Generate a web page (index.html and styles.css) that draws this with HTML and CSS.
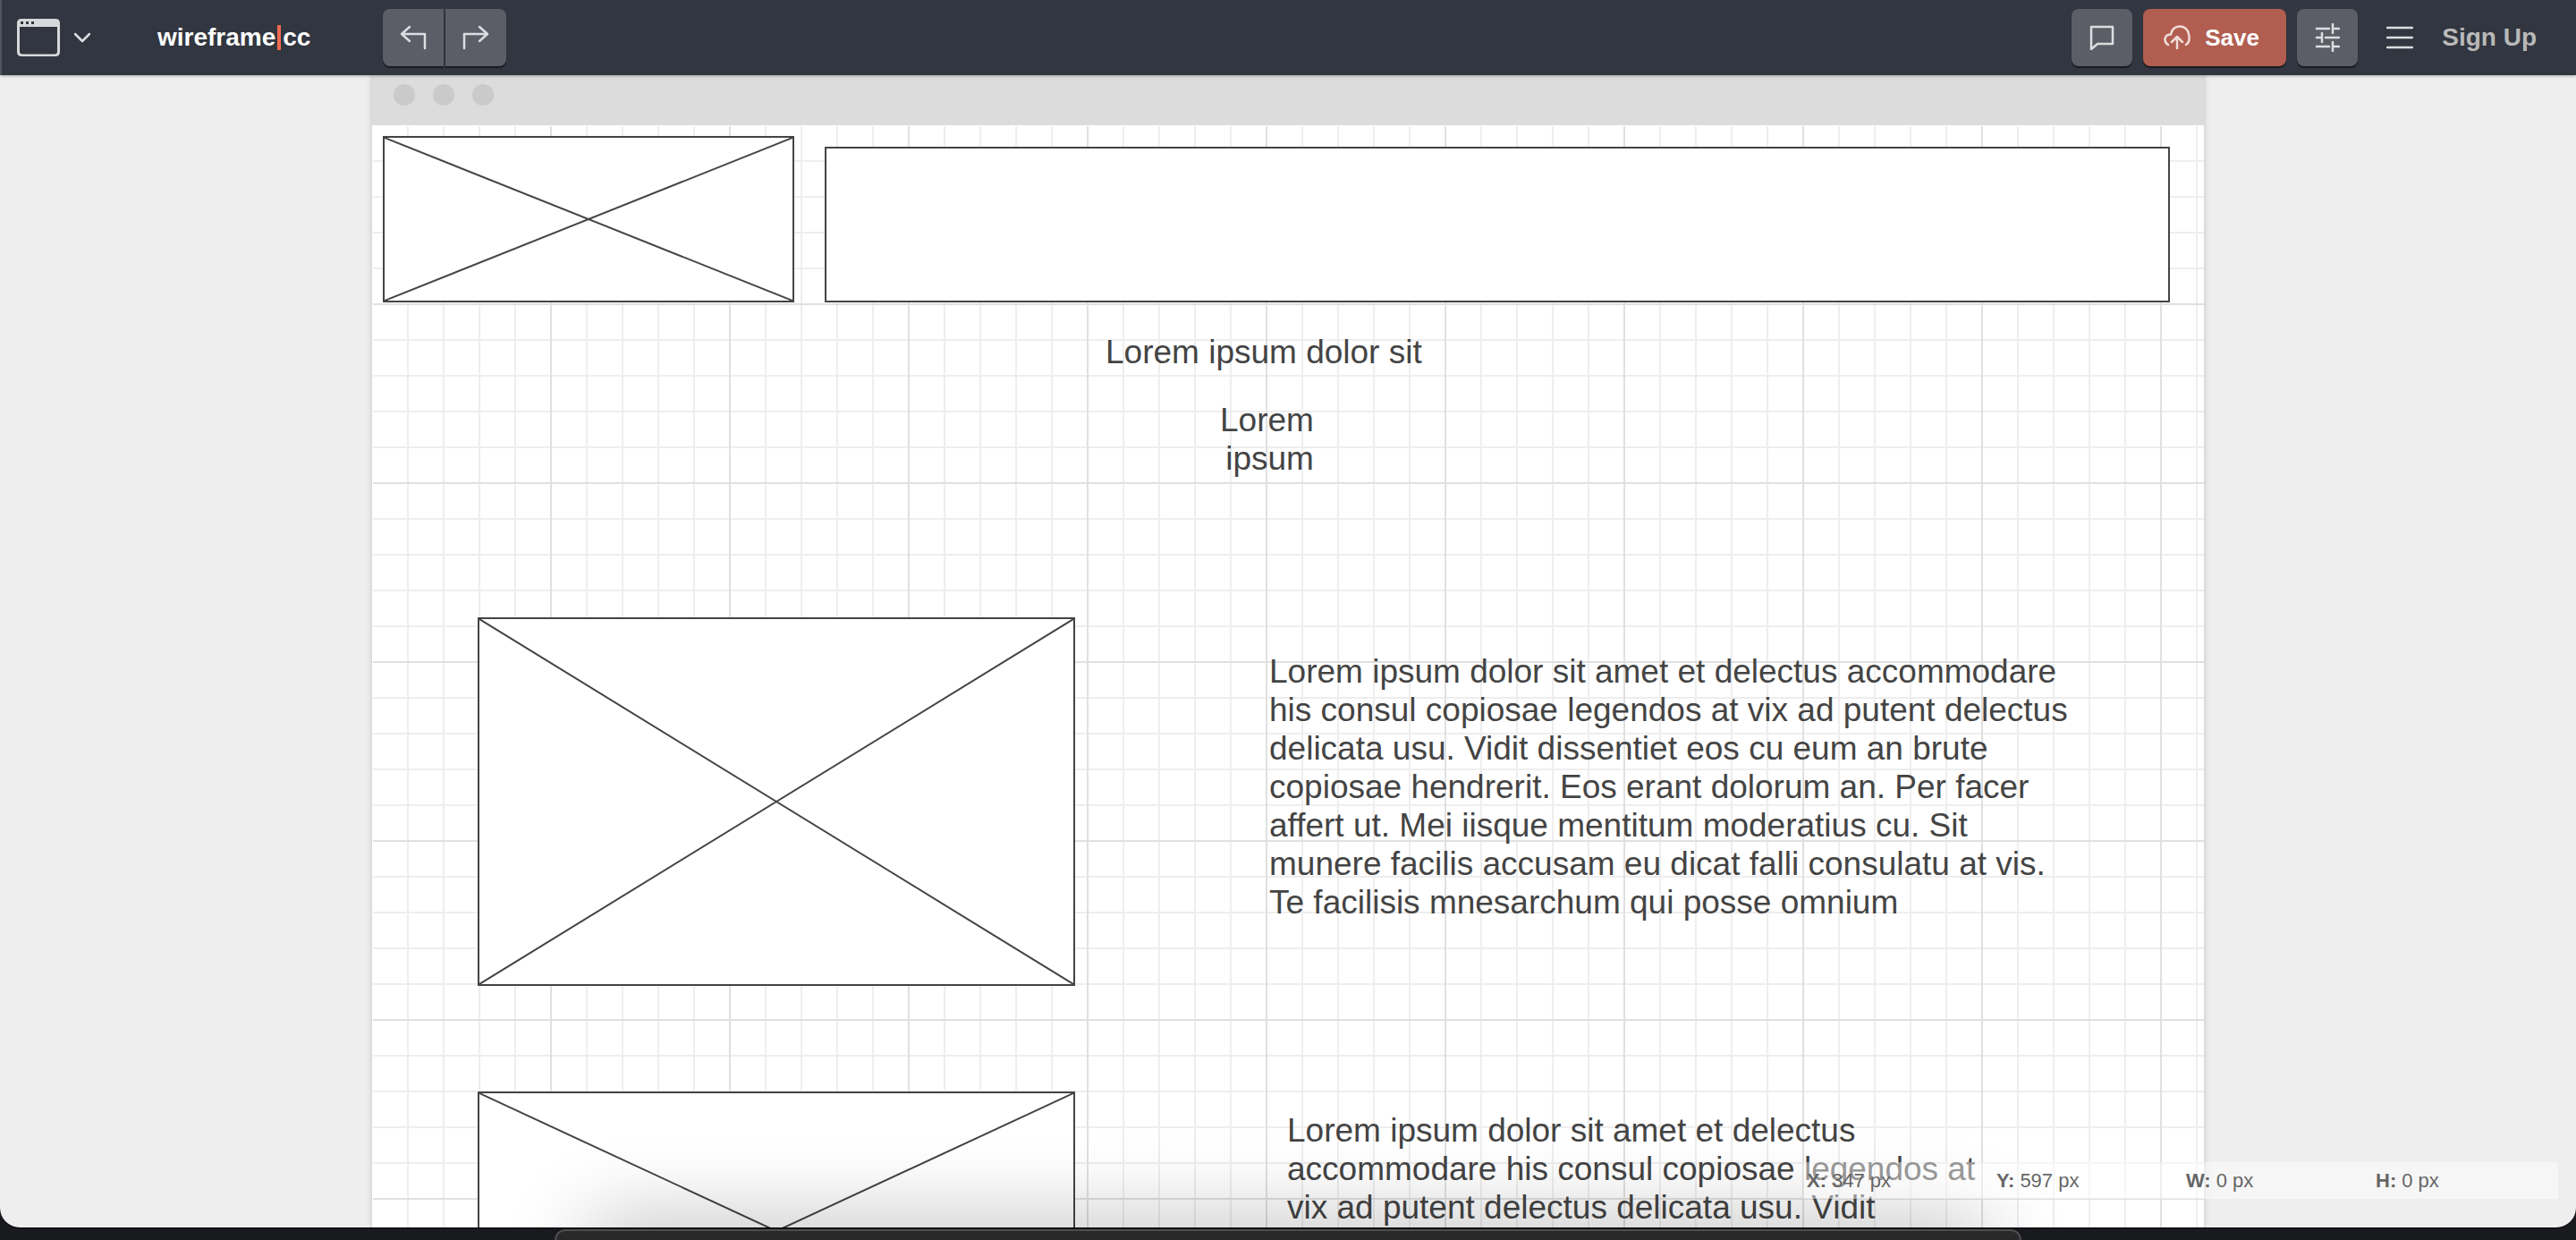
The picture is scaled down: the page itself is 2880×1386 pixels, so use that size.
FILE: index.html
```
<!DOCTYPE html>
<html lang="en">
<head>
<meta charset="utf-8">
<title>wireframe|cc</title>
<link rel="stylesheet" href="styles.css">
</head>
<body>
<div class="window">
  <header class="toolbar">
    <button class="device" aria-label="Choose canvas type">
      <svg width="48" height="42" viewBox="0 0 48 42"><path fill="#d7d8da" fill-rule="evenodd" d="M5 0H43Q48 0 48 5V37Q48 42 43 42H5Q0 42 0 37V5Q0 0 5 0ZM3 9V36.500Q3 39.500 6 39.500H42Q45 39.500 45 36.500V9ZM4 3V6H7V3ZM10 3V6H13V3ZM16 3V6H19V3Z"/></svg>
      <svg width="18" height="12" viewBox="0 0 18 12"><path class="stroke" d="M1 2L9 10L17 2"/></svg>
    </button>
    <a class="logo" href="#">wireframe<span class="logo-bar"></span>cc</a>
    <div class="history">
      <button class="tool tool-left" aria-label="Undo"><svg width="30" height="28" viewBox="0 0 30 28"><path class="stroke" d="M11 2L2 10L11 18M2 10H28V26"/></svg></button>
      <button class="tool tool-right" aria-label="Redo"><svg width="30" height="28" viewBox="0 0 30 28"><path class="stroke" d="M19 2L28 10L19 18M28 10H2V26"/></svg></button>
    </div>
    <div class="actions">
      <button class="tool" aria-label="Comments"><svg width="28" height="28" viewBox="0 0 28 28"><path class="stroke" d="M2 2H26V21H9L2 27Z"/></svg></button>
      <button class="tool save"><svg width="30" height="28" viewBox="0 0 30 28"><path class="stroke" d="M5 22C-1 18 1 10.500 8 10.500C9.500 -1.500 26 -1.500 28 10C29.500 16 28 20 25 22M15 26V13M9 19L15 13L21 19"/></svg>Save</button>
      <button class="tool" aria-label="Settings"><svg width="28" height="32" viewBox="0 0 28 32"><path class="stroke" d="M2 6H16M20 6H27M20 1V11M2 16H8M12 16H27M8 11V21M2 26H16M20 26H27M20 21V31"/></svg></button>
      <button class="menu" aria-label="Menu"><svg width="30" height="26" viewBox="0 0 30 26"><path class="stroke" d="M1 2H29M1 13H29M1 24H29"/></svg></button>
      <a class="signup" href="#">Sign Up</a>
    </div>
  </header>
  <main class="workspace">
    <div class="browser">
      <div class="browser-bar"><span class="dot"></span><span class="dot"></span><span class="dot"></span></div>
      <div class="canvas">
        <svg class="item box image-header" preserveAspectRatio="none" viewBox="0 0 100 100"><path d="M0 0L100 100M100 0L0 100"/></svg>
        <div class="item box banner"></div>
        <p class="item title">Lorem ipsum dolor sit</p>
        <p class="item subtitle">Lorem<br>ipsum</p>
        <svg class="item box image-first" preserveAspectRatio="none" viewBox="0 0 100 100"><path d="M0 0L100 100M100 0L0 100"/></svg>
        <p class="item text-first">Lorem ipsum dolor sit amet et delectus accommodare<br>his consul copiosae legendos at vix ad putent delectus<br>delicata usu. Vidit dissentiet eos cu eum an brute<br>copiosae hendrerit. Eos erant dolorum an. Per facer<br>affert ut. Mei iisque mentitum moderatius cu. Sit<br>munere facilis accusam eu dicat falli consulatu at vis.<br>Te facilisis mnesarchum qui posse omnium</p>
        <svg class="item box image-second" preserveAspectRatio="none" viewBox="0 0 100 100"><path d="M0 0L100 100M100 0L0 100"/></svg>
        <p class="item text-second">Lorem ipsum dolor sit amet et delectus<br>accommodare his consul copiosae legendos at<br>vix ad putent delectus delicata usu. Vidit</p>
      </div>
    </div>
  </main>
  <div class="dock-shadow"></div>
  <dl class="status">
    <div><dt>X:</dt> <dd>347 px</dd></div>
    <div><dt>Y:</dt> <dd>597 px</dd></div>
    <div><dt>W:</dt> <dd>0 px</dd></div>
    <div><dt>H:</dt> <dd>0 px</dd></div>
  </dl>
</div>
<div class="dock"></div>
</body>
</html>
```

FILE: styles.css
```
* { box-sizing: border-box; }
body {
  margin: 0;
  height: 100vh;
  overflow: hidden;
  display: flex;
  flex-direction: column;
  background: #191a1e;
  font-family: "Liberation Sans", Arial, sans-serif;
  color: #444;
}
button { border: 0; padding: 0; background: none; font: inherit; color: inherit; cursor: pointer; }
a { color: inherit; text-decoration: none; }
p, dl, dd { margin: 0; }

.window {
  position: relative;
  flex: 1;
  min-height: 0;
  display: flex;
  flex-direction: column;
  overflow: hidden;
  background: #eee;
  border-radius: 0 0 22px 22px;
  box-shadow: 0 1px 0 #000;
}
.stroke {
  fill: none;
  stroke: #dcdde0;
  stroke-width: 2.5;
  stroke-linecap: round;
  stroke-linejoin: round;
}

.toolbar {
  position: relative;
  z-index: 2;
  flex: none;
  height: 84px;
  display: flex;
  align-items: center;
  padding: 0 44px 0 19px;
  background: #323640;
  box-shadow: inset 2px 0 #525660, 0 1px 3px rgba(0, 0, 0, .3);
}
.device { display: flex; align-items: center; gap: 16px; }
.logo { display: flex; align-items: center; margin-left: 75px; font-size: 28px; line-height: 32px; font-weight: bold; color: #fff; }
.logo-bar { width: 4px; height: 28px; margin: 0 2px; background: #ee6a50; }
.history { display: flex; gap: 2px; margin-left: 81px; }
.tool {
  width: 68px;
  height: 64px;
  display: flex;
  align-items: center;
  justify-content: center;
  border-radius: 8px;
  background: #5b5e67;
  box-shadow: 0 2px 1px #1a1a1e;
}
.tool-left { border-radius: 8px 0 0 8px; }
.tool-right { border-radius: 0 8px 8px 0; }
.actions { display: flex; align-items: center; gap: 12px; margin-left: auto; }
.save { width: 160px; justify-content: flex-start; padding-left: 23px; gap: 16px; background: #b15e50; color: #fff; font-size: 26px; font-weight: bold; }
.save .stroke { stroke: #f0dcd8; }
.menu { display: flex; margin: 0 20px; }
.signup { font-size: 28px; line-height: 32px; font-weight: bold; color: #b9b9b9; }

.workspace { flex: 1; min-height: 0; display: flex; justify-content: center; }
.browser { width: 2052px; display: flex; flex-direction: column; box-shadow: 0 0 8px rgba(0, 0, 0, .08); }
.browser-bar { flex: none; height: 56px; display: flex; gap: 20px; padding: 10px 26px; background: #dcdcdc; }
.dot { width: 24px; height: 24px; border-radius: 50%; background: #cacaca; }
.canvas {
  position: relative;
  flex: 1;
  border: solid #dcdcdc;
  border-width: 0 2px;
  background-color: #fff;
  background-image:
    linear-gradient(to right, transparent 198px, #e0e0e0 198px),
    linear-gradient(to bottom, transparent 198px, #e0e0e0 198px),
    linear-gradient(to right, transparent 38px, #eee 38px),
    linear-gradient(to bottom, transparent 38px, #eee 38px);
  background-size: 200px 200px, 200px 200px, 40px 40px, 40px 40px;
  background-position: 1px 1px;
}
/* cover the grid lines that the shifted tiles leave along the top and left edges */
.canvas::before {
  content: "";
  position: absolute;
  inset: 0;
  border: solid #fff;
  border-width: 1px 0 0 1px;
}
.item { position: absolute; font-size: 37px; line-height: 43px; white-space: nowrap; }
.box { border: 2px solid #444; background: #fff; }
.box path { stroke: #444; stroke-width: 2; vector-effect: non-scaling-stroke; }
.image-header { left: 12px; top: 12px; width: 460px; height: 186px; }
.banner { left: 506px; top: 24px; width: 1504px; height: 174px; }
.title { left: 820px; top: 232px; }
.subtitle { left: 948px; top: 308px; text-align: right; }
.image-first { left: 118px; top: 550px; width: 668px; height: 412px; }
.text-first { left: 1003px; top: 589px; }
.image-second { left: 118px; top: 1080px; width: 668px; height: 312px; }
.text-second { left: 1023px; top: 1102px; }

.dock-shadow {
  position: absolute;
  left: 660px;
  right: 660px;
  bottom: -60px;
  height: 60px;
  border-radius: 30px;
  box-shadow: 0 0 90px 10px rgba(0, 0, 0, .24);
}
.status {
  position: absolute;
  right: 20px;
  bottom: 32px;
  width: 844px;
  height: 41px;
  padding: 8px 0 0 4px;
  display: grid;
  grid-template-columns: repeat(4, 212px);
  background: rgba(255, 255, 255, .45);
  font-size: 22px;
  line-height: 26px;
  color: #666;
}
.status div { display: flex; gap: 6px; }
.status dt { font-weight: bold; }
.dock {
  flex: none;
  height: 12px;
  margin: 2px 620px 0;
  border: solid #4c4c4d;
  border-width: 2px 2px 0;
  border-radius: 36px 36px 0 0;
  background: #29292a;
}
```
